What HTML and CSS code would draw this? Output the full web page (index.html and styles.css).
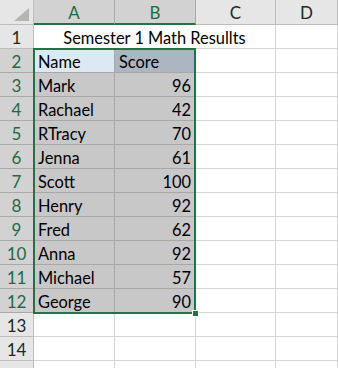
FILE: index.html
```html
<!DOCTYPE html>
<html lang="en">
<head>
    <meta charset="UTF-8">
    <meta name="viewport" content="width=device-width, initial-scale=1.0">
    <title>Semester 1 Math Results</title>
    <link rel="stylesheet" href="styles.css">
</head>
<body>
    <div class="sheet">
        <!-- column headers -->
        <div class="corner"><span class="corner-tri"></span></div>
        <div class="col-head sel">A</div>
        <div class="col-head sel">B</div>
        <div class="col-head">C</div>
        <div class="col-head">D</div>

        <!-- row 1: merged title -->
        <div class="row-head">1</div>
        <div class="cell title">Semester 1 Math Resullts</div>
        <div class="cell"></div>

        <div class="row-head sel">2</div>
        <div class="cell sel name-head">Name</div>
        <div class="cell sel score-head">Score</div>
        <div class="cell"></div>
        <div class="cell"></div>

        <div class="row-head sel">3</div>
        <div class="cell sel">Mark</div>
        <div class="cell sel num">96</div>
        <div class="cell"></div>
        <div class="cell"></div>

        <div class="row-head sel">4</div>
        <div class="cell sel">Rachael</div>
        <div class="cell sel num">42</div>
        <div class="cell"></div>
        <div class="cell"></div>

        <div class="row-head sel">5</div>
        <div class="cell sel">RTracy</div>
        <div class="cell sel num">70</div>
        <div class="cell"></div>
        <div class="cell"></div>

        <div class="row-head sel">6</div>
        <div class="cell sel">Jenna</div>
        <div class="cell sel num">61</div>
        <div class="cell"></div>
        <div class="cell"></div>

        <div class="row-head sel">7</div>
        <div class="cell sel">Scott</div>
        <div class="cell sel num">100</div>
        <div class="cell"></div>
        <div class="cell"></div>

        <div class="row-head sel">8</div>
        <div class="cell sel">Henry</div>
        <div class="cell sel num">92</div>
        <div class="cell"></div>
        <div class="cell"></div>

        <div class="row-head sel">9</div>
        <div class="cell sel">Fred</div>
        <div class="cell sel num">62</div>
        <div class="cell"></div>
        <div class="cell"></div>

        <div class="row-head sel">10</div>
        <div class="cell sel">Anna</div>
        <div class="cell sel num">92</div>
        <div class="cell"></div>
        <div class="cell"></div>

        <div class="row-head sel">11</div>
        <div class="cell sel">Michael</div>
        <div class="cell sel num">57</div>
        <div class="cell"></div>
        <div class="cell"></div>

        <div class="row-head sel">12</div>
        <div class="cell sel">George</div>
        <div class="cell sel num">90</div>
        <div class="cell"></div>
        <div class="cell"></div>

        <div class="row-head">13</div>
        <div class="cell"></div>
        <div class="cell"></div>
        <div class="cell"></div>
        <div class="cell"></div>

        <div class="row-head">14</div>
        <div class="cell"></div>
        <div class="cell"></div>
        <div class="cell"></div>
        <div class="cell"></div>

        <!-- next row peeks in at the bottom edge -->
        <div class="row-head"></div>
        <div class="cell"></div>
        <div class="cell"></div>
        <div class="cell"></div>
        <div class="cell"></div>

        <!-- active range outline A2:B12 -->
        <div class="selection"><span class="fill-handle"></span></div>
    </div>
</body>
</html>
```

FILE: styles.css
```css
* {
    box-sizing: border-box;
    margin: 0;
    padding: 0;
}

body {
    background: #ffffff;
    font-family: Lato, 'Open Sans', sans-serif;
    font-size: 16.4px;
    color: #000000;
    overflow: hidden;
}

.sheet {
    position: relative;
    display: grid;
    grid-template-columns: 34px 81px 81px 80px 1fr;
    grid-template-rows: 25px repeat(15, 24px);
}

.corner {
    position: relative;
    background: #e6e6e6;
    border-right: 1px solid #bdbdbd;
    border-bottom: 1px solid #bdbdbd;
}

.corner-tri {
    position: absolute;
    right: 4px;
    bottom: 3px;
    width: 0;
    height: 0;
    border-left: 15px solid transparent;
    border-bottom: 13px solid #b5b5b5;
}

.col-head {
    background: #e6e6e6;
    border-right: 1px solid #bdbdbd;
    border-bottom: 1px solid #bdbdbd;
    display: flex;
    align-items: center;
    justify-content: center;
    padding-top: 1px;
    font-size: 17px;
    color: #262626;
}

.col-head.sel {
    background: #d2d2d2;
    color: #1e6b40;
    border-bottom: 2px solid #217346;
    border-right-color: #a9a9a9;
}

.row-head {
    background: #e6e6e6;
    border-right: 1px solid #bdbdbd;
    border-bottom: 1px solid #bdbdbd;
    display: flex;
    align-items: center;
    justify-content: center;
    padding-top: 2px;
    font-size: 17px;
    color: #262626;
}

.row-head.sel {
    background: #d2d2d2;
    color: #1e6b40;
    border-bottom-color: #a9a9a9;
}

.cell {
    border-right: 1px solid #d4d4d4;
    border-bottom: 1px solid #d4d4d4;
    padding: 2px 4px 0;
    display: flex;
    align-items: center;
    white-space: nowrap;
}

.cell.title {
    grid-column: span 3;
    justify-content: center;
}

.cell.sel {
    background: #c8c8c8;
    border-right-color: #a8a8a8;
    border-bottom-color: #a8a8a8;
}

.cell.name-head {
    background: #dce9f5;
}

.cell.score-head {
    background: #abb6c2;
}

.cell.num {
    justify-content: flex-end;
}

/* outline drawn over A2:B12 */
.selection {
    position: absolute;
    left: 33px;
    top: 48px;
    width: 163px;
    height: 266px;
    border: 2px solid #217346;
    pointer-events: none;
}

.fill-handle {
    position: absolute;
    right: -5px;
    bottom: -5px;
    width: 7px;
    height: 7px;
    background: #217346;
    border: 1px solid #ffffff;
}
```
